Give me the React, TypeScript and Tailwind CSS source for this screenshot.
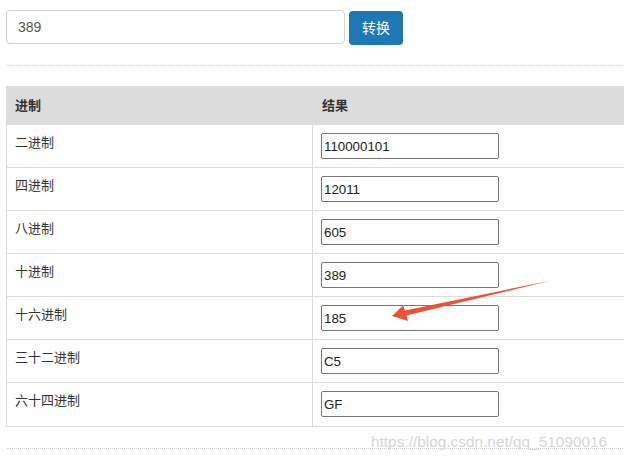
import React from "react";

const rows: [string, string][] = [
  ["二进制", "110000101"],
  ["四进制", "12011"],
  ["八进制", "605"],
  ["十进制", "389"],
  ["十六进制", "185"],
  ["三十二进制", "C5"],
  ["六十四进制", "GF"],
];

export default function App() {
  return (
    <div
      className="relative w-[624px] h-[459px] overflow-hidden bg-white pl-[6px]"
      style={{ fontFamily: '"Liberation Sans", "Noto Sans CJK SC", sans-serif' }}
    >
      <div className="flex gap-[4px] pt-[10px]">
        <div className="w-[339px] h-[34px] border border-[#d4d4d4] rounded-[4px] flex items-center pl-[11px] text-[14px] text-[#555]">
          389
        </div>
        <button className="w-[54px] h-[34px] mt-[1px] rounded-[4px] bg-[#1f78b6] text-white text-[14px]">
          转换
        </button>
      </div>
      <div className="mt-[20px] ml-[1px] border-t border-dotted border-[#cfcfcf] w-[640px]" />
      <div className="mt-[20px] w-[650px] border-l border-b border-[#dcdcdc]">
        <div className="flex h-[39px] bg-[#dcdcdc] items-center text-[13px] font-bold text-[#333]">
          <div className="w-[306px] pl-[8px]">进制</div>
          <div className="pl-[9px]">结果</div>
        </div>
        {rows.map(([name, val], i) => (
          <div
            key={name}
            className={`flex h-[43px] ${i < rows.length - 1 ? "border-b border-[#dcdcdc]" : ""}`}
          >
            <div className="w-[306px] border-r border-[#dcdcdc] pl-[8px] pt-[9px] text-[13px] leading-[18px] text-[#333]">
              {name}
            </div>
            <div className="pl-[8px] pt-[8px]">
              <div className="w-[178px] h-[26px] border border-[#767676] rounded-[2px] flex items-center pl-[2px] pt-[2px] text-[13.3px] text-[#222]">
                {val}
              </div>
            </div>
          </div>
        ))}
      </div>
      <div className="mt-[21px] ml-[1px] border-t border-dotted border-[#cfcfcf] w-[640px]" />
      <div className="absolute left-[371px] top-[430px] text-[15.4px] text-[#d6d6d6]">
        https://blog.csdn.net/qq_51090016
      </div>
      <svg className="absolute left-0 top-0" width="624" height="459" viewBox="0 0 624 459">
        <polygon
          points="551,280.5 405,310.5 403,305.5 392,316 408,321 406.5,315.5"
          fill="#ee5236"
        />
      </svg>
    </div>
  );
}
